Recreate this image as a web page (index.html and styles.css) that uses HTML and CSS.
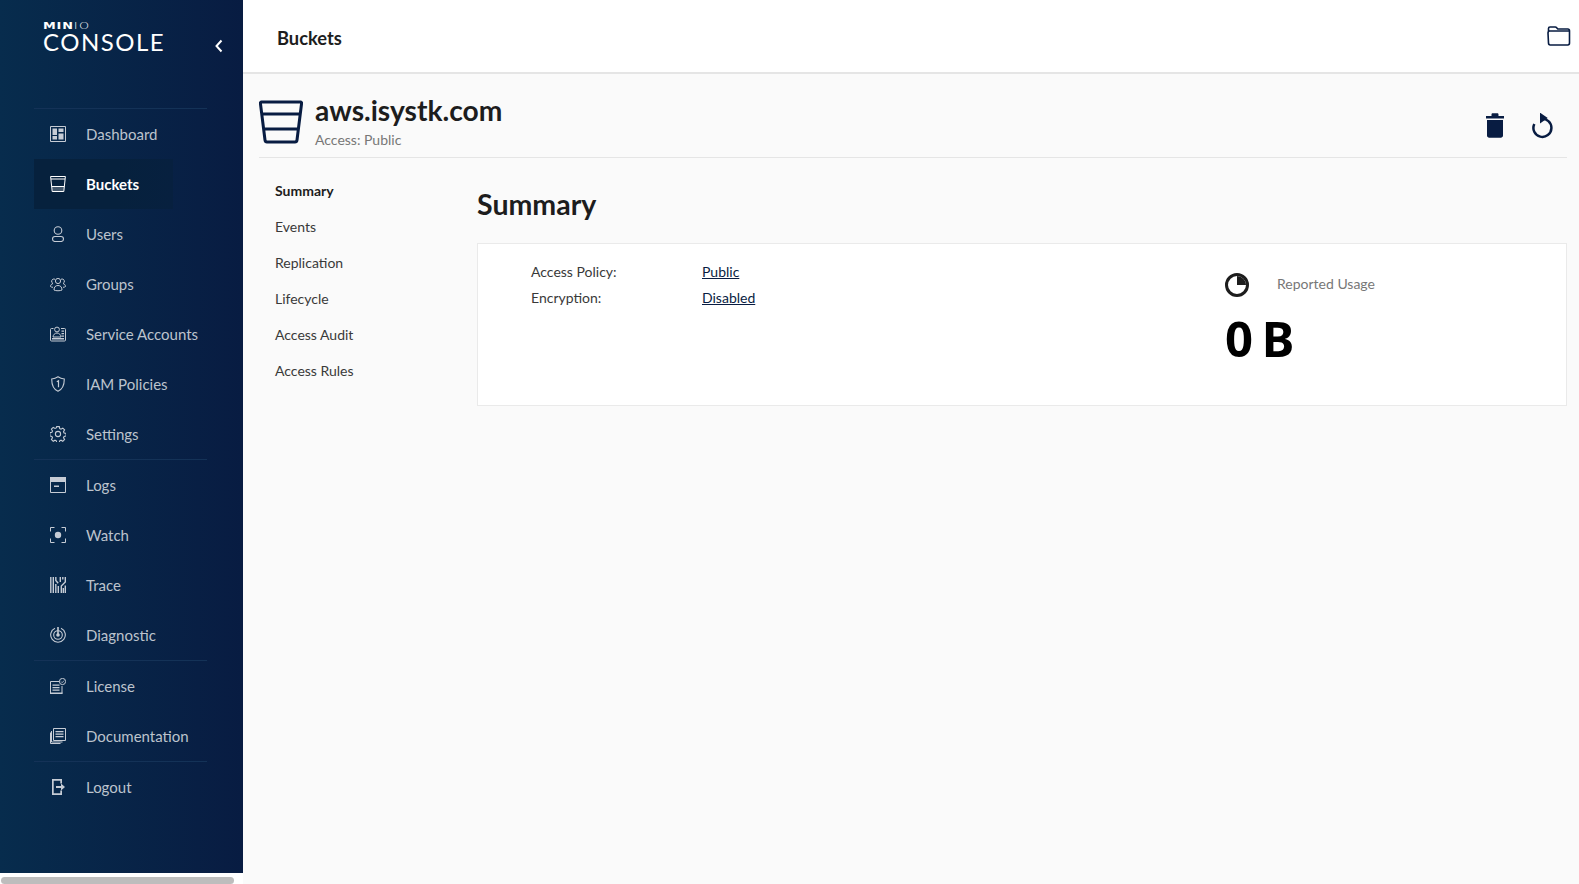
FILE: index.html
```html
<!DOCTYPE html>
<html lang="en">
<head>
  <meta charset="UTF-8">
  <title>MinIO Console</title>
  <link rel="stylesheet" href="styles.css">
</head>
<body>

<div class="app">
  <!-- Sidebar -->
  <aside class="sidebar">
    <div class="sidebar-panel">
      <div class="brand">
        <div class="logo">
          <div class="logo-minio"><b>MIN</b><span>IO</span></div>
          <div class="logo-console">CONSOLE</div>
        </div>
        <svg class="collapse" viewBox="0 0 10 14"><path d="M7.500 1.500 2.500 7l5 5.500" fill="none" stroke="#fff" stroke-width="2"/></svg>
      </div>

      <nav class="menu">
        <ul class="menu-group">
          <li class="menu-item">
            <svg viewBox="0 0 16 16"><path d="M.5.500h15v15H.5z" fill="none" stroke="currentColor"/><path d="M2.500 2.500h4.500v6.500H2.500zM2.500 10h4.500v3.500H2.500zM8.500 2.500h5v3.500h-5zM8.500 7.500h5v6h-5z" fill="currentColor"/></svg>
            <span>Dashboard</span>
          </li>
          <li class="menu-item active">
            <svg viewBox="0 0 16 16"><path d="M.6.500h14.800L13.800 15.500H2.200z" fill="none" stroke="currentColor"/><path d="M1 3h14M1.800 10.500h12.400" fill="none" stroke="currentColor"/><path d="M2 11h12l-.3 4H2.300z" fill="currentColor" opacity=".25"/></svg>
            <span>Buckets</span>
          </li>
          <li class="menu-item">
            <svg viewBox="0 0 16 16"><circle cx="8" cy="4.500" r="3.800" fill="none" stroke="currentColor" stroke-width="1.100"/><rect x="2.500" y="10.500" width="11" height="5" rx="2.500" fill="none" stroke="currentColor" stroke-width="1.100"/></svg>
            <span>Users</span>
          </li>
          <li class="menu-item">
            <svg viewBox="0 0 16 16"><g fill="none" stroke="currentColor"><circle cx="8" cy="5" r="2.600"/><path d="M4 14c0-3 1.500-4.500 4-4.500s4 1.500 4 4.500c-1.500 1-6.500 1-8 0z"/><path d="M5 3.200A2 2 0 1 0 3 7.500C1.500 8 .5 9 .5 10.500c.5.500 1.500.8 2.500.8M11 3.200a2 2 0 1 1 2 4.300c1.500.5 2.500 1.500 2.500 3-.5.500-1.500.8-2.500.8"/></g></svg>
            <span>Groups</span>
          </li>
          <li class="menu-item">
            <svg viewBox="0 0 16 16"><g fill="none" stroke="currentColor"><path d="M3.500 2.500h-2a1 1 0 0 0-1 1v10.500a1 1 0 0 0 1 1h13a1 1 0 0 0 1-1V3.500a1 1 0 0 0-1-1H11"/><circle cx="7" cy="3.500" r="2.400"/><path d="M3 11c0-2 1.800-4 4-4s4 2 4 4z"/></g><path d="M11.500 4.500h2.500v1.200h-2.500zM11.500 7h2.500v1.200h-2.500zM11.500 9.500h2.500v1.200h-2.500zM2 12h12v1.500H2z" fill="currentColor"/></svg>
            <span>Service Accounts</span>
          </li>
          <li class="menu-item">
            <svg viewBox="0 0 16 16"><path d="M8 .8c2 1.400 4 2 6.300 2.200 0 5.500-1 10-6.300 12.200C2.700 13 1.700 8.500 1.700 3 4 2.800 6 2.200 8 .8z" fill="none" stroke="currentColor" stroke-width="1.100"/><path d="M6.800 5.800 8.500 4.800v6.500" fill="none" stroke="currentColor" stroke-width="1.200"/></svg>
            <span>IAM Policies</span>
          </li>
          <li class="menu-item">
            <svg viewBox="0 0 16 16"><g fill="none" stroke="currentColor" stroke-width="1.100"><path d="M6.700.6h2.600l.4 2 1.300.6 1.800-1.100 1.800 1.800-1.100 1.800.6 1.300 2 .4v2.600l-2 .4-.6 1.300 1.100 1.800-1.800 1.800-1.800-1.100-1.300.6-.4 2H6.700l-.4-2-1.300-.6-1.800 1.100-1.800-1.800 1.100-1.800-.6-1.300-2-.4V6.700l2-.4.6-1.300-1.100-1.800 1.800-1.800 1.800 1.100 1.300-.6z"/><circle cx="8" cy="8" r="2.600"/></g></svg>
            <span>Settings</span>
          </li>
        </ul>
        <ul class="menu-group">
          <li class="menu-item">
            <svg viewBox="0 0 16 16"><path d="M.5.500h15v15H.5z" fill="none" stroke="currentColor"/><path d="M0 0h16v5H0zM4 8.500h5V10H4z" fill="currentColor"/></svg>
            <span>Logs</span>
          </li>
          <li class="menu-item">
            <svg viewBox="0 0 16 16"><path d="M4.500.500H.5v4M11.500.500h4v4M4.500 15.500H.5v-4M11.500 15.500h4v-4" fill="none" stroke="currentColor"/><circle cx="8" cy="8" r="3.200" fill="currentColor"/></svg>
            <span>Watch</span>
          </li>
          <li class="menu-item">
            <svg viewBox="0 0 16 16"><path d="M.8 0v16M3.300 0v16M5.800 0v3.500l2.400 2.700M5.800 7v9M10.300 0v5M12.800 0v2.500M15.300 0v5l-4 4v7M15.300 8.500V16M13.300 11v5M8.300 9v7" fill="none" stroke="currentColor" stroke-width="1.400"/></svg>
            <span>Trace</span>
          </li>
          <li class="menu-item">
            <svg viewBox="0 0 16 16"><g fill="none" stroke="currentColor" stroke-width="1.100"><path d="M5 1.300a7.300 7.300 0 1 0 6 0"/><circle cx="8" cy="8" r="4.300"/></g><path d="M7.200 0h1.600v7H7.200z" fill="currentColor"/><circle cx="8" cy="8" r="1.800" fill="currentColor"/></svg>
            <span>Diagnostic</span>
          </li>
        </ul>
        <ul class="menu-group">
          <li class="menu-item">
            <svg viewBox="0 0 16 16"><path d="M9.500 3.500H.5v12h11.500V8" fill="none" stroke="currentColor"/><path d="M2.500 6.500h7v1.200h-7zM2.500 9h7v1.200h-7zM2.500 11.500h7v1.200h-7zM0 14.500h12.500V16H0z" fill="currentColor"/><circle cx="12.500" cy="3.500" r="3.100" fill="none" stroke="currentColor"/><path d="M11 3.500l1.200 1.200 1.800-2" fill="none" stroke="currentColor" stroke-width=".8"/></svg>
            <span>License</span>
          </li>
          <li class="menu-item">
            <svg viewBox="0 0 16 16"><g fill="none" stroke="currentColor"><path d="M3.500.500h12v12h-12z"/><path d="M1.500 3v11h11M.5 4.500v11h10"/></g><path d="M5.500 3h8v1.200h-8zM5.500 5.500h8v1.200h-8zM5.500 8h8v1.200h-8z" fill="currentColor"/></svg>
            <span>Documentation</span>
          </li>
        </ul>
        <ul class="menu-group">
          <li class="menu-item">
            <svg viewBox="0 0 16 16"><path d="M2 0h10v4.500h-1.700V1.700H3.700v12.600h6.600V11.500H12V16H2z" fill="currentColor"/><path d="M6 7h5V4.500L15 8l-4 3.500V9H6z" fill="currentColor"/></svg>
            <span>Logout</span>
          </li>
        </ul>
      </nav>
    </div>
    <div class="scroll-track"><div class="scroll-thumb"></div></div>
  </aside>

  <!-- Main content -->
  <div class="content">
    <header class="topbar">
      <h1 class="page-title">Buckets</h1>
      <svg class="folder" viewBox="0 0 24 20"><path d="M1.500 5V2.500C1.500 1.500 2.200 1 3 1h5.200c.8 0 1.200.3 1.700.9l.9 1.100h10c1 0 1.700.7 1.700 1.700v12.400c0 1-.7 1.900-1.700 1.900H3.200c-1 0-1.700-.9-1.700-1.900L1 7c0-1 .7-2 1.700-2h19" fill="none" stroke="#081c42" stroke-width="1.600"/></svg>
    </header>

    <main class="page">
      <section class="bucket-head">
        <svg class="bucket-icon" viewBox="0 0 44 44"><path d="M2.500 2h39c.8 0 1.200.5 1.100 1.300L38 40c-.2 1.400-1 2-2 2H8c-1 0-1.800-.6-2-2L1.400 3.300C1.300 2.500 1.700 2 2.500 2zM2.800 14h38.400M5 29h34" fill="none" stroke="#081c42" stroke-width="3"/></svg>
        <div class="bucket-info">
          <div class="bucket-name">aws.isystk.com</div>
          <div class="bucket-access">Access: Public</div>
        </div>
        <div class="bucket-actions">
          <svg class="trash" viewBox="0 0 18 25"><path d="M0 3h5.500V1.500C5.500.7 6 .3 6.800.3h4.400c.8 0 1.300.4 1.300 1.200V3H18v2.500H0zM1 7h16v15.500c0 1.300-1 2.200-2.200 2.200H3.200C2 24.700 1 23.800 1 22.500z" fill="#081c42"/></svg>
          <svg class="refresh" viewBox="0 0 22 26"><path d="M9 6A9 9 0 1 1 2.300 11" fill="none" stroke="#081c42" stroke-width="2.500"/><path d="M9 1.500 14 5 9 8.500z" fill="#081c42" stroke="#081c42" stroke-width="2"/></svg>
        </div>
      </section>

      <div class="bucket-body">
        <ul class="tabs">
          <li class="tab selected">Summary</li>
          <li class="tab">Events</li>
          <li class="tab">Replication</li>
          <li class="tab">Lifecycle</li>
          <li class="tab">Access Audit</li>
          <li class="tab">Access Rules</li>
        </ul>

        <div class="summary">
          <h2 class="summary-title">Summary</h2>
          <div class="card">
            <dl class="details">
              <dt>Access Policy:</dt>
              <dd><a href="#">Public</a></dd>
              <dt>Encryption:</dt>
              <dd><a href="#">Disabled</a></dd>
            </dl>
            <div class="usage">
              <div class="usage-head">
                <svg class="pie" viewBox="0 0 24 24"><circle cx="12" cy="12" r="10.500" fill="none" stroke="#1d1d1d" stroke-width="3"/><path d="M12 3v9h9a9 9 0 0 0-9-9z" fill="#1d1d1d"/></svg>
                <span class="usage-label">Reported Usage</span>
              </div>
              <div class="usage-value">0 B</div>
            </div>
          </div>
        </div>
      </div>
    </main>
  </div>
</div>

</body>
</html>
```

FILE: styles.css
```css
* {
  box-sizing: border-box;
}

html, body {
  height: 100%;
  margin: 0;
}

body {
  font-family: 'Lato', sans-serif;
  color: #393939;
  background-color: #fafafa;
  overflow: hidden;
}

ul {
  list-style: none;
  margin: 0;
  padding: 0;
}

.app {
  display: flex;
  height: 100vh;
}

/* Sidebar */
.sidebar {
  width: 243px;
  flex-shrink: 0;
  display: flex;
  flex-direction: column;
  background-color: #fff;
}

.sidebar-panel {
  flex: 1;
  padding: 0 36px 0 34px;
  background: linear-gradient(90deg, #072c4d 0%, #081c42 100%);
}

.brand {
  height: 108px;
  padding: 21px 0 0 9px;
  position: relative;
  color: #fff;
}

.logo-minio {
  font-family: 'DejaVu Sans', sans-serif;
  font-size: 9.500px;
  line-height: 10px;
  transform-origin: left;
  transform: scaleX(1.350);
}

.logo-minio b {
  letter-spacing: .6px;
}

.logo-minio span {
  font-weight: 200;
  letter-spacing: 1.200px;
}

.logo-console {
  font-weight: 400;
  font-size: 24px;
  line-height: 22px;
  letter-spacing: 1.500px;
}

.collapse {
  position: absolute;
  left: 180px;
  top: 39px;
  width: 10px;
  height: 14px;
}

.menu-group {
  border-top: 1px solid #143257;
}

.menu-item {
  height: 50px;
  width: 139px;
  padding: 0 0 1px 16px;
  display: flex;
  align-items: center;
  gap: 20px;
  font-size: 15px;
  color: #bcc3cd;
  white-space: nowrap;
}

.menu-item svg {
  width: 16px;
  height: 16px;
  flex-shrink: 0;
  color: #c6ccd5;
}

.menu-item.active {
  background: linear-gradient(90deg, #06213d 60%, #07203f 100%);
  color: #fff;
  font-weight: 700;
}

.menu-item.active svg {
  color: #fff;
}

.scroll-track {
  height: 11px;
  padding: 4px 9px 0 1px;
}

.scroll-thumb {
  height: 7px;
  border-radius: 4px;
  background-color: #bdbdbd;
}

/* Main content */
.content {
  flex: 1;
  min-width: 0;
  display: flex;
  flex-direction: column;
}

.topbar {
  height: 74px;
  padding: 4px 8px 0 34px;
  display: flex;
  align-items: center;
  justify-content: space-between;
  background-color: #fff;
  border-bottom: 2px solid #e5e5e5;
}

.page-title {
  margin: 0;
  font-size: 18.300px;
  font-weight: 700;
  color: #1d1d1d;
}

.folder {
  width: 24px;
  height: 20px;
  margin-top: -4px;
}

.page {
  flex: 1;
  padding: 0 12px 0 16px;
}

.bucket-head {
  height: 84px;
  padding-top: 26px;
  display: flex;
  align-items: flex-start;
  border-bottom: 1px solid #e5e5e5;
}

.bucket-icon {
  width: 44px;
  height: 44px;
  flex-shrink: 0;
  margin-right: 12px;
}

.bucket-name {
  font-size: 28.200px;
  font-weight: 700;
  line-height: 30px;
  margin-top: -5px;
  color: #1d1d1d;
}

.bucket-access {
  font-size: 14px;
  line-height: 20px;
  margin-top: 5px;
  color: #777;
}

.bucket-actions {
  margin-left: auto;
  padding: 13px 13px 0 0;
  display: flex;
  gap: 28px;
}

.trash {
  width: 18px;
  height: 25px;
}

.refresh {
  width: 22px;
  height: 26px;
}

.bucket-body {
  display: flex;
}

.tabs {
  width: 218px;
  flex-shrink: 0;
  padding: 14px 0 0 16px;
}

.tab {
  height: 36px;
  display: flex;
  align-items: center;
  font-size: 14px;
  color: #393939;
}

.tab.selected {
  font-weight: 700;
  color: #1d1d1d;
}

.summary {
  flex: 1;
}

.summary-title {
  margin: 0;
  padding-top: 28px;
  height: 85px;
  font-size: 28.500px;
  line-height: 36px;
  font-weight: 700;
  color: #1d1d1d;
}

.card {
  height: 163px;
  padding: 14px 53px;
  display: flex;
  justify-content: space-between;
  background-color: #fff;
  border: 1px solid #eaeaea;
}

.details {
  margin: 0;
  display: grid;
  grid-template-columns: 171px auto;
  grid-auto-rows: 26px;
  align-items: center;
  align-content: start;
  font-size: 14px;
}

.details dd {
  margin: 0;
  padding-top: 1px;
}

.details a {
  color: #081c42;
}

.usage {
  width: 288px;
  margin-top: 15px;
}

.usage-head {
  display: flex;
  align-items: center;
  gap: 28px;
}

.pie {
  width: 24px;
  height: 24px;
}

.usage-label {
  font-size: 14px;
  color: #777;
  margin-top: -3px;
}

.usage-value {
  margin-top: 16px;
  font-family: 'Noto Sans', sans-serif;
  font-size: 49px;
  line-height: 50px;
  font-weight: 700;
  word-spacing: -4px;
  color: #000;
}
```
